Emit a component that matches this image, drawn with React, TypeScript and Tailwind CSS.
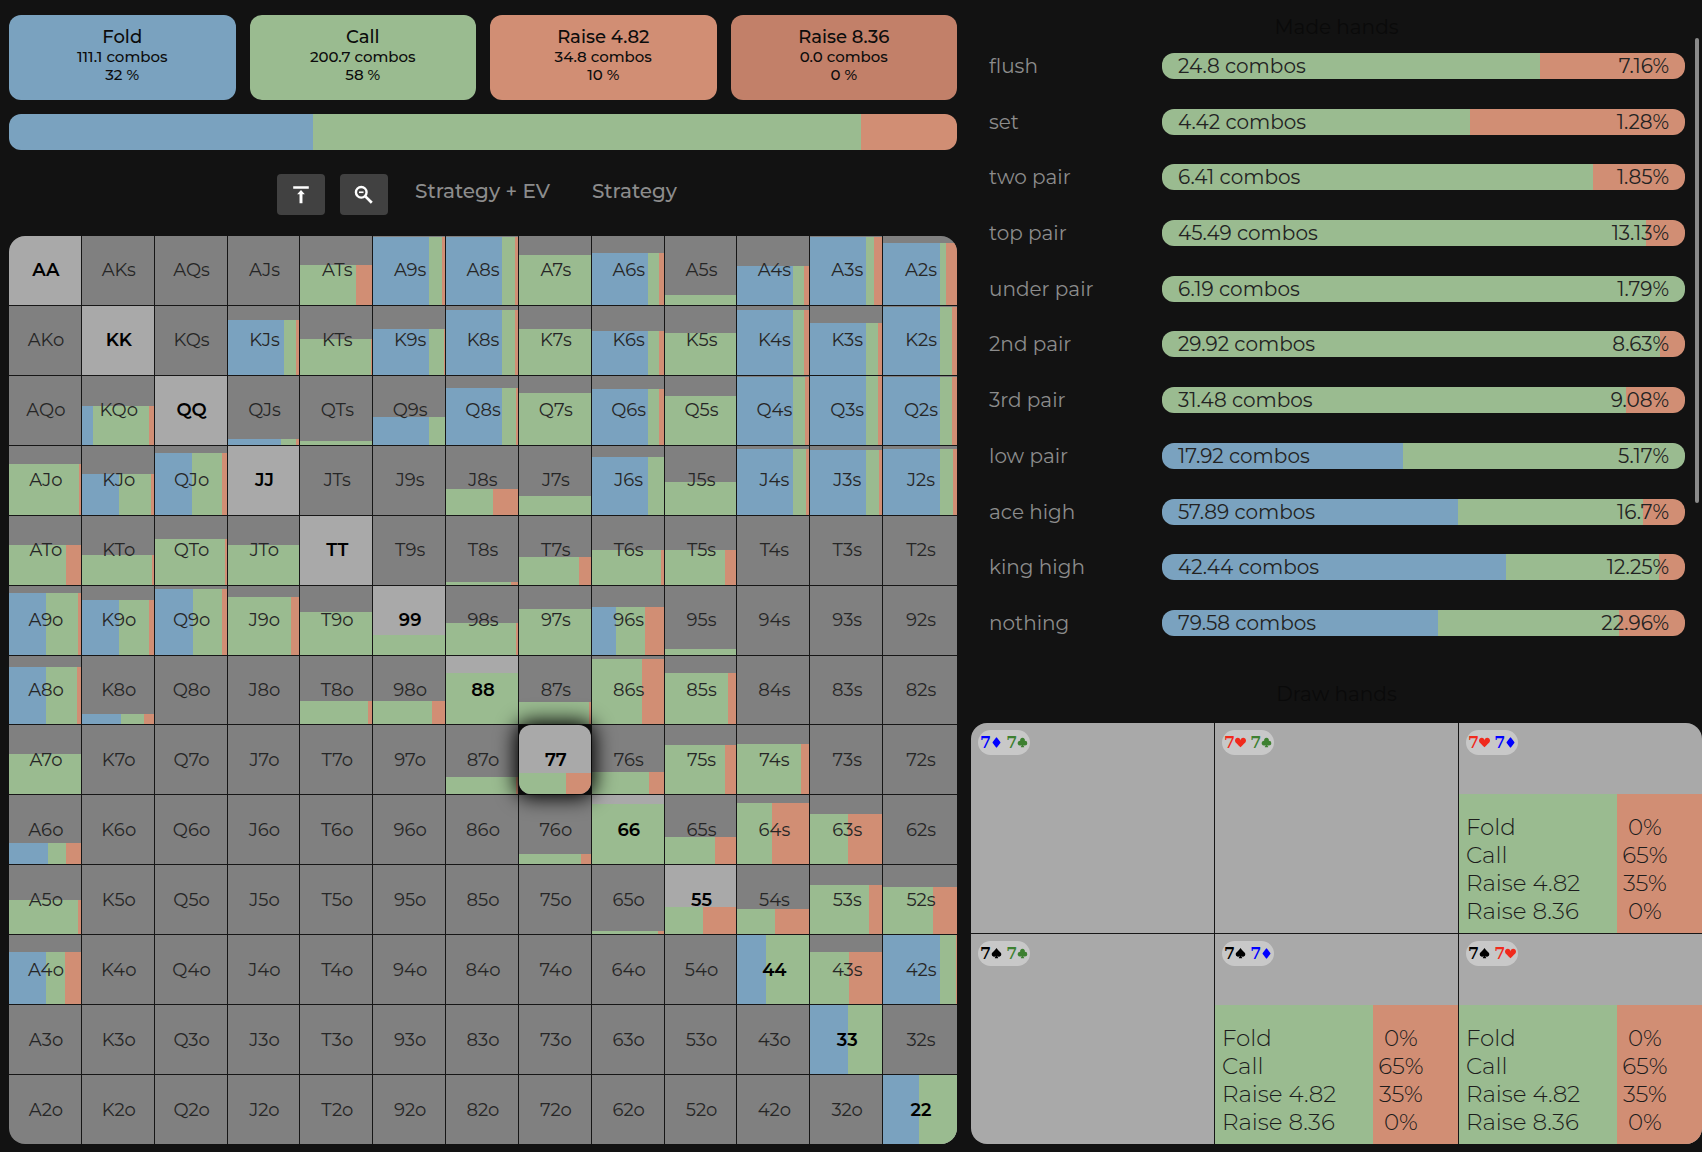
import React from "react";
import { BsSuitClubFill, BsSuitDiamondFill, BsSuitHeartFill, BsSuitSpadeFill } from "react-icons/bs";

type Mix = [height: number, fold: number, call: number];

const RANKS = ["A", "K", "Q", "J", "T", "9", "8", "7", "6", "5", "4", "3", "2"];

const STRATEGY: Record<string, Mix> = {
  ATs: [58, 0, 78], A9s: [98, 78, 18], A8s: [98, 78, 18], A7s: [73, 0, 100], A6s: [75, 78, 16],
  A5s: [15, 0, 100], A4s: [56, 78, 14], A3s: [98, 78, 10], A2s: [90, 77, 8],
  KJs: [79, 78, 18], KTs: [52, 0, 98], K9s: [67, 78, 20], K8s: [94, 78, 18], K7s: [67, 0, 100],
  K6s: [63, 78, 16], K5s: [61, 0, 100], K4s: [94, 78, 14], K3s: [75, 78, 16], K2s: [98, 77, 16],
  KQo: [56, 16, 77], QJs: [8, 74, 22], QTs: [6, 0, 100], Q9s: [40, 78, 22], Q8s: [83, 78, 20],
  Q7s: [75, 0, 100], Q6s: [81, 78, 16], Q5s: [71, 0, 100], Q4s: [98, 78, 16], Q3s: [100, 78, 16],
  Q2s: [98, 77, 16],
  AJo: [73, 0, 98], KJo: [59, 52, 44], QJo: [89, 52, 42], J8s: [37, 0, 66], J7s: [27, 0, 100],
  J6s: [83, 78, 22], J5s: [48, 0, 100], J4s: [96, 78, 18], J3s: [94, 78, 18], J2s: [96, 77, 18],
  ATo: [58, 0, 80], KTo: [43, 0, 98], QTo: [66, 0, 98], JTo: [58, 0, 100], T8s: [4, 0, 90],
  T7s: [40, 0, 84], T6s: [50, 0, 96], T5s: [50, 0, 84],
  A9o: [89, 52, 44], K9o: [79, 52, 42], Q9o: [95, 53, 41], J9o: [83, 0, 88], T9o: [62, 0, 99],
  "99": [29, 0, 100], "98s": [46, 0, 98], "97s": [66, 0, 100], "96s": [69, 34, 40], "95s": [8, 0, 100],
  A8o: [84, 52, 42], K8o: [15, 54, 32], T8o: [34, 0, 94], "98o": [34, 0, 82], "88": [75, 0, 100],
  "87s": [32, 0, 98], "86s": [95, 0, 70], "85s": [74, 0, 88],
  A7o: [59, 0, 100], "87o": [25, 0, 98], "77": [31, 0, 66], "76s": [33, 0, 80], "75s": [71, 0, 84],
  "74s": [73, 0, 88],
  A6o: [31, 54, 26], "76o": [15, 0, 86], "66": [87, 0, 100], "65s": [40, 0, 70], "64s": [89, 0, 48],
  "63s": [73, 0, 52],
  A5o: [50, 0, 96], "65o": [5, 0, 92], "55": [40, 0, 54], "54s": [36, 0, 52], "53s": [71, 0, 82],
  "52s": [69, 0, 67],
  A4o: [75, 52, 26], "44": [100, 40, 60], "43s": [75, 0, 54], "42s": [100, 77, 22],
  "33": [100, 52, 48], "22": [100, 49, 51],
};

const ACTIONS = [
  { name: "Fold", combos: "111.1 combos", share: "32 %", color: "bg-[#7aa2bf]" },
  { name: "Call", combos: "200.7 combos", share: "58 %", color: "bg-[#9abb90]" },
  { name: "Raise 4.82", combos: "34.8 combos", share: "10 %", color: "bg-[#d18e74]" },
  { name: "Raise 8.36", combos: "0.0 combos", share: "0 %", color: "bg-[#c28069]" },
];

const MADE_HANDS = [
  { name: "flush", combos: "24.8", share: "7.16%", fold: 0, call: 72.3 },
  { name: "set", combos: "4.42", share: "1.28%", fold: 0, call: 58.9 },
  { name: "two pair", combos: "6.41", share: "1.85%", fold: 0, call: 82.4 },
  { name: "top pair", combos: "45.49", share: "13.13%", fold: 0, call: 92.6 },
  { name: "under pair", combos: "6.19", share: "1.79%", fold: 0, call: 100 },
  { name: "2nd pair", combos: "29.92", share: "8.63%", fold: 0, call: 95.3 },
  { name: "3rd pair", combos: "31.48", share: "9.08%", fold: 0, call: 88.7 },
  { name: "low pair", combos: "17.92", share: "5.17%", fold: 46, call: 54 },
  { name: "ace high", combos: "57.89", share: "16.7%", fold: 56.6, call: 35.4 },
  { name: "king high", combos: "42.44", share: "12.25%", fold: 65.7, call: 29.4 },
  { name: "nothing", combos: "79.58", share: "22.96%", fold: 52.8, call: 34.5 },
];

type Suit = "d" | "c" | "h" | "s";

const SUITS = {
  d: { Icon: BsSuitDiamondFill, color: "text-[#0000ff]" },
  c: { Icon: BsSuitClubFill, color: "text-[#3d8030]" },
  h: { Icon: BsSuitHeartFill, color: "text-[#f02a1c]" },
  s: { Icon: BsSuitSpadeFill, color: "text-black" },
};

const COMBOS: { suits: [Suit, Suit]; played: boolean }[] = [
  { suits: ["d", "c"], played: false },
  { suits: ["h", "c"], played: false },
  { suits: ["h", "d"], played: true },
  { suits: ["s", "c"], played: false },
  { suits: ["s", "d"], played: true },
  { suits: ["s", "h"], played: true },
];

const COMBO_ROWS = [
  ["Fold", "0%"],
  ["Call", "65%"],
  ["Raise 4.82", "35%"],
  ["Raise 8.36", "0%"],
];

function Segments({ fold, call }: { fold: number; call: number }) {
  return (
    <>
      <span className="h-full shrink-0 bg-[#7aa2bf]" style={{ width: `${fold}%` }} />
      <span className="h-full shrink-0 bg-[#9abb90]" style={{ width: `${call}%` }} />
      <span className="h-full flex-1 bg-[#d18e74]" />
    </>
  );
}

function handName(row: number, col: number) {
  if (row === col) return RANKS[row] + RANKS[col];
  return row < col ? `${RANKS[row]}${RANKS[col]}s` : `${RANKS[col]}${RANKS[row]}o`;
}

function HandCell({ row, col }: { row: number; col: number }) {
  const name = handName(row, col);
  const mix = STRATEGY[name];
  const pair = row === col;
  const selected = name === "77";
  return (
    <button
      type="button"
      aria-pressed={selected}
      className={`relative flex min-h-8 items-center justify-center overflow-hidden pl-[2px] text-lg ${
        pair ? "bg-[#a9a9a9] font-semibold text-black" : "bg-[#808080] text-[#262626]"
      } ${selected ? "z-10 rounded-xl shadow-[0_0_20px_4px_#000]" : ""}`}
    >
      {mix && (
        <span className="absolute inset-x-0 bottom-0 flex" style={{ height: `${mix[0]}%` }}>
          <Segments fold={mix[1]} call={mix[2]} />
        </span>
      )}
      <span className="relative">{name}</span>
    </button>
  );
}

function SuitCard({ suit }: { suit: Suit }) {
  const { Icon, color } = SUITS[suit];
  return (
    <span className={`flex items-center ${color}`}>
      <span className="font-['DejaVu_Serif',serif] text-base leading-none font-bold">7</span>
      <Icon className="size-[11px]" />
    </span>
  );
}

function ComboCell({ suits, played }: { suits: [Suit, Suit]; played: boolean }) {
  return (
    <div className="relative flex flex-col justify-between bg-[#a9a9a9] pt-[7px]">
      <div className="ml-[7px] flex h-[25px] items-center gap-[4px] self-start rounded-full bg-[#c8c8c8] px-[2px]">
        <SuitCard suit={suits[0]} />
        <SuitCard suit={suits[1]} />
      </div>
      {played && (
        <>
          <div className="absolute inset-x-0 bottom-0 flex h-[66%]">
            <Segments fold={0} call={65} />
          </div>
          <table className="relative mb-2 w-[90%] table-fixed text-[23px] leading-7 text-[#1c1c1c]">
            <tbody>
              {COMBO_ROWS.map(([label, value]) => (
                <tr key={label}>
                  <th scope="row" className="w-[70%] pl-[7px] text-left font-light whitespace-nowrap">
                    {label}
                  </th>
                  <td className="text-center font-light">{value}</td>
                </tr>
              ))}
            </tbody>
          </table>
        </>
      )}
    </div>
  );
}

export default function App() {
  return (
    <main className="grid min-h-screen grid-cols-[948fr_731fr] gap-[14px] bg-[#121212] pl-[9px] pb-2 font-['Montserrat','Inter',sans-serif]">
      <section className="flex flex-col pt-[15px]">
        <div className="grid grid-cols-4 gap-[14px]">
          {ACTIONS.map((a) => (
            <button
              key={a.name}
              type="button"
              className={`flex h-[85px] flex-col items-center rounded-xl pt-[11px] text-[15px] leading-[18px] font-medium text-[#0c0c0c] ${a.color}`}
            >
              <span className="text-lg leading-[22px]">{a.name}</span>
              <span>{a.combos}</span>
              <span>{a.share}</span>
            </button>
          ))}
        </div>

        <div className="mt-[14px] flex h-9 overflow-hidden rounded-xl">
          <Segments fold={32.1} call={57.8} />
        </div>

        <div className="flex h-[86px] items-start justify-center pt-6 pr-3 text-xl font-medium text-[#8c8c8c]">
          <button
            type="button"
            aria-label="Go to top"
            className="mr-[15px] flex h-[41px] w-12 items-center justify-center rounded bg-[#414141]"
          >
            <svg viewBox="0 0 24 24" className="size-[22px] fill-white">
              <path d="M3.500 2.500h17v2.800h-17zM12 6.500l4.200 4.700h-2.600V21h-3.200v-9.800H7.800z" />
            </svg>
          </button>
          <button
            type="button"
            aria-label="Zoom out"
            className="mr-[27px] flex h-[41px] w-12 items-center justify-center rounded bg-[#414141]"
          >
            <svg viewBox="0 0 24 24" className="size-[22px] fill-none stroke-white">
              <circle cx="9" cy="9" r="5.800" strokeWidth="2.600" />
              <path d="M13.500 13.500l7 7" strokeWidth="3" />
              <path d="M6.500 9h5" strokeWidth="1.800" />
            </svg>
          </button>
          <button type="button" className="mr-[42px] h-[34px]">
            Strategy + EV
          </button>
          <button type="button" className="h-[34px]">
            Strategy
          </button>
        </div>

        <div className="grid flex-1 grid-cols-[repeat(12,72fr)_74fr] grid-rows-13 gap-px overflow-hidden rounded-2xl bg-[#161616]">
          {RANKS.map((_, row) => RANKS.map((__, col) => <HandCell key={`${row}-${col}`} row={row} col={col} />))}
        </div>
      </section>

      <section className="flex flex-col">
        <h2 className="pt-4 text-center text-xl leading-[22px] text-[#0a0a0a]">Made hands</h2>
        <div className="flex items-start pr-[3px]">
          <ul className="flex h-[598px] min-w-0 flex-1 flex-col justify-between pt-[15px] pr-[10px] pl-[18px] text-xl">
            {MADE_HANDS.map((h) => (
              <li key={h.name} className="flex h-[26px] items-center">
                <span className="w-[173px] shrink-0 text-[#8c8c8c]">{h.name}</span>
                <div className="relative flex h-full flex-1 overflow-hidden rounded-xl">
                  <Segments fold={h.fold} call={h.call} />
                  <div className="absolute inset-0 flex items-center justify-between px-4 text-[#222]">
                    <span>{h.combos} combos</span>
                    <span>{h.share}</span>
                  </div>
                </div>
              </li>
            ))}
          </ul>
          <div className="h-[465px] w-1 rounded-full bg-[#8a8a8a]" />
        </div>
        <h2 className="pt-11 text-center text-xl leading-7 text-[#0a0a0a]">Draw hands</h2>
        <div className="mt-[15px] grid flex-1 grid-cols-3 grid-rows-2 gap-px overflow-hidden rounded-2xl bg-[#161616]">
          {COMBOS.map((c) => (
            <ComboCell key={c.suits.join("")} suits={c.suits} played={c.played} />
          ))}
        </div>
      </section>
    </main>
  );
}
